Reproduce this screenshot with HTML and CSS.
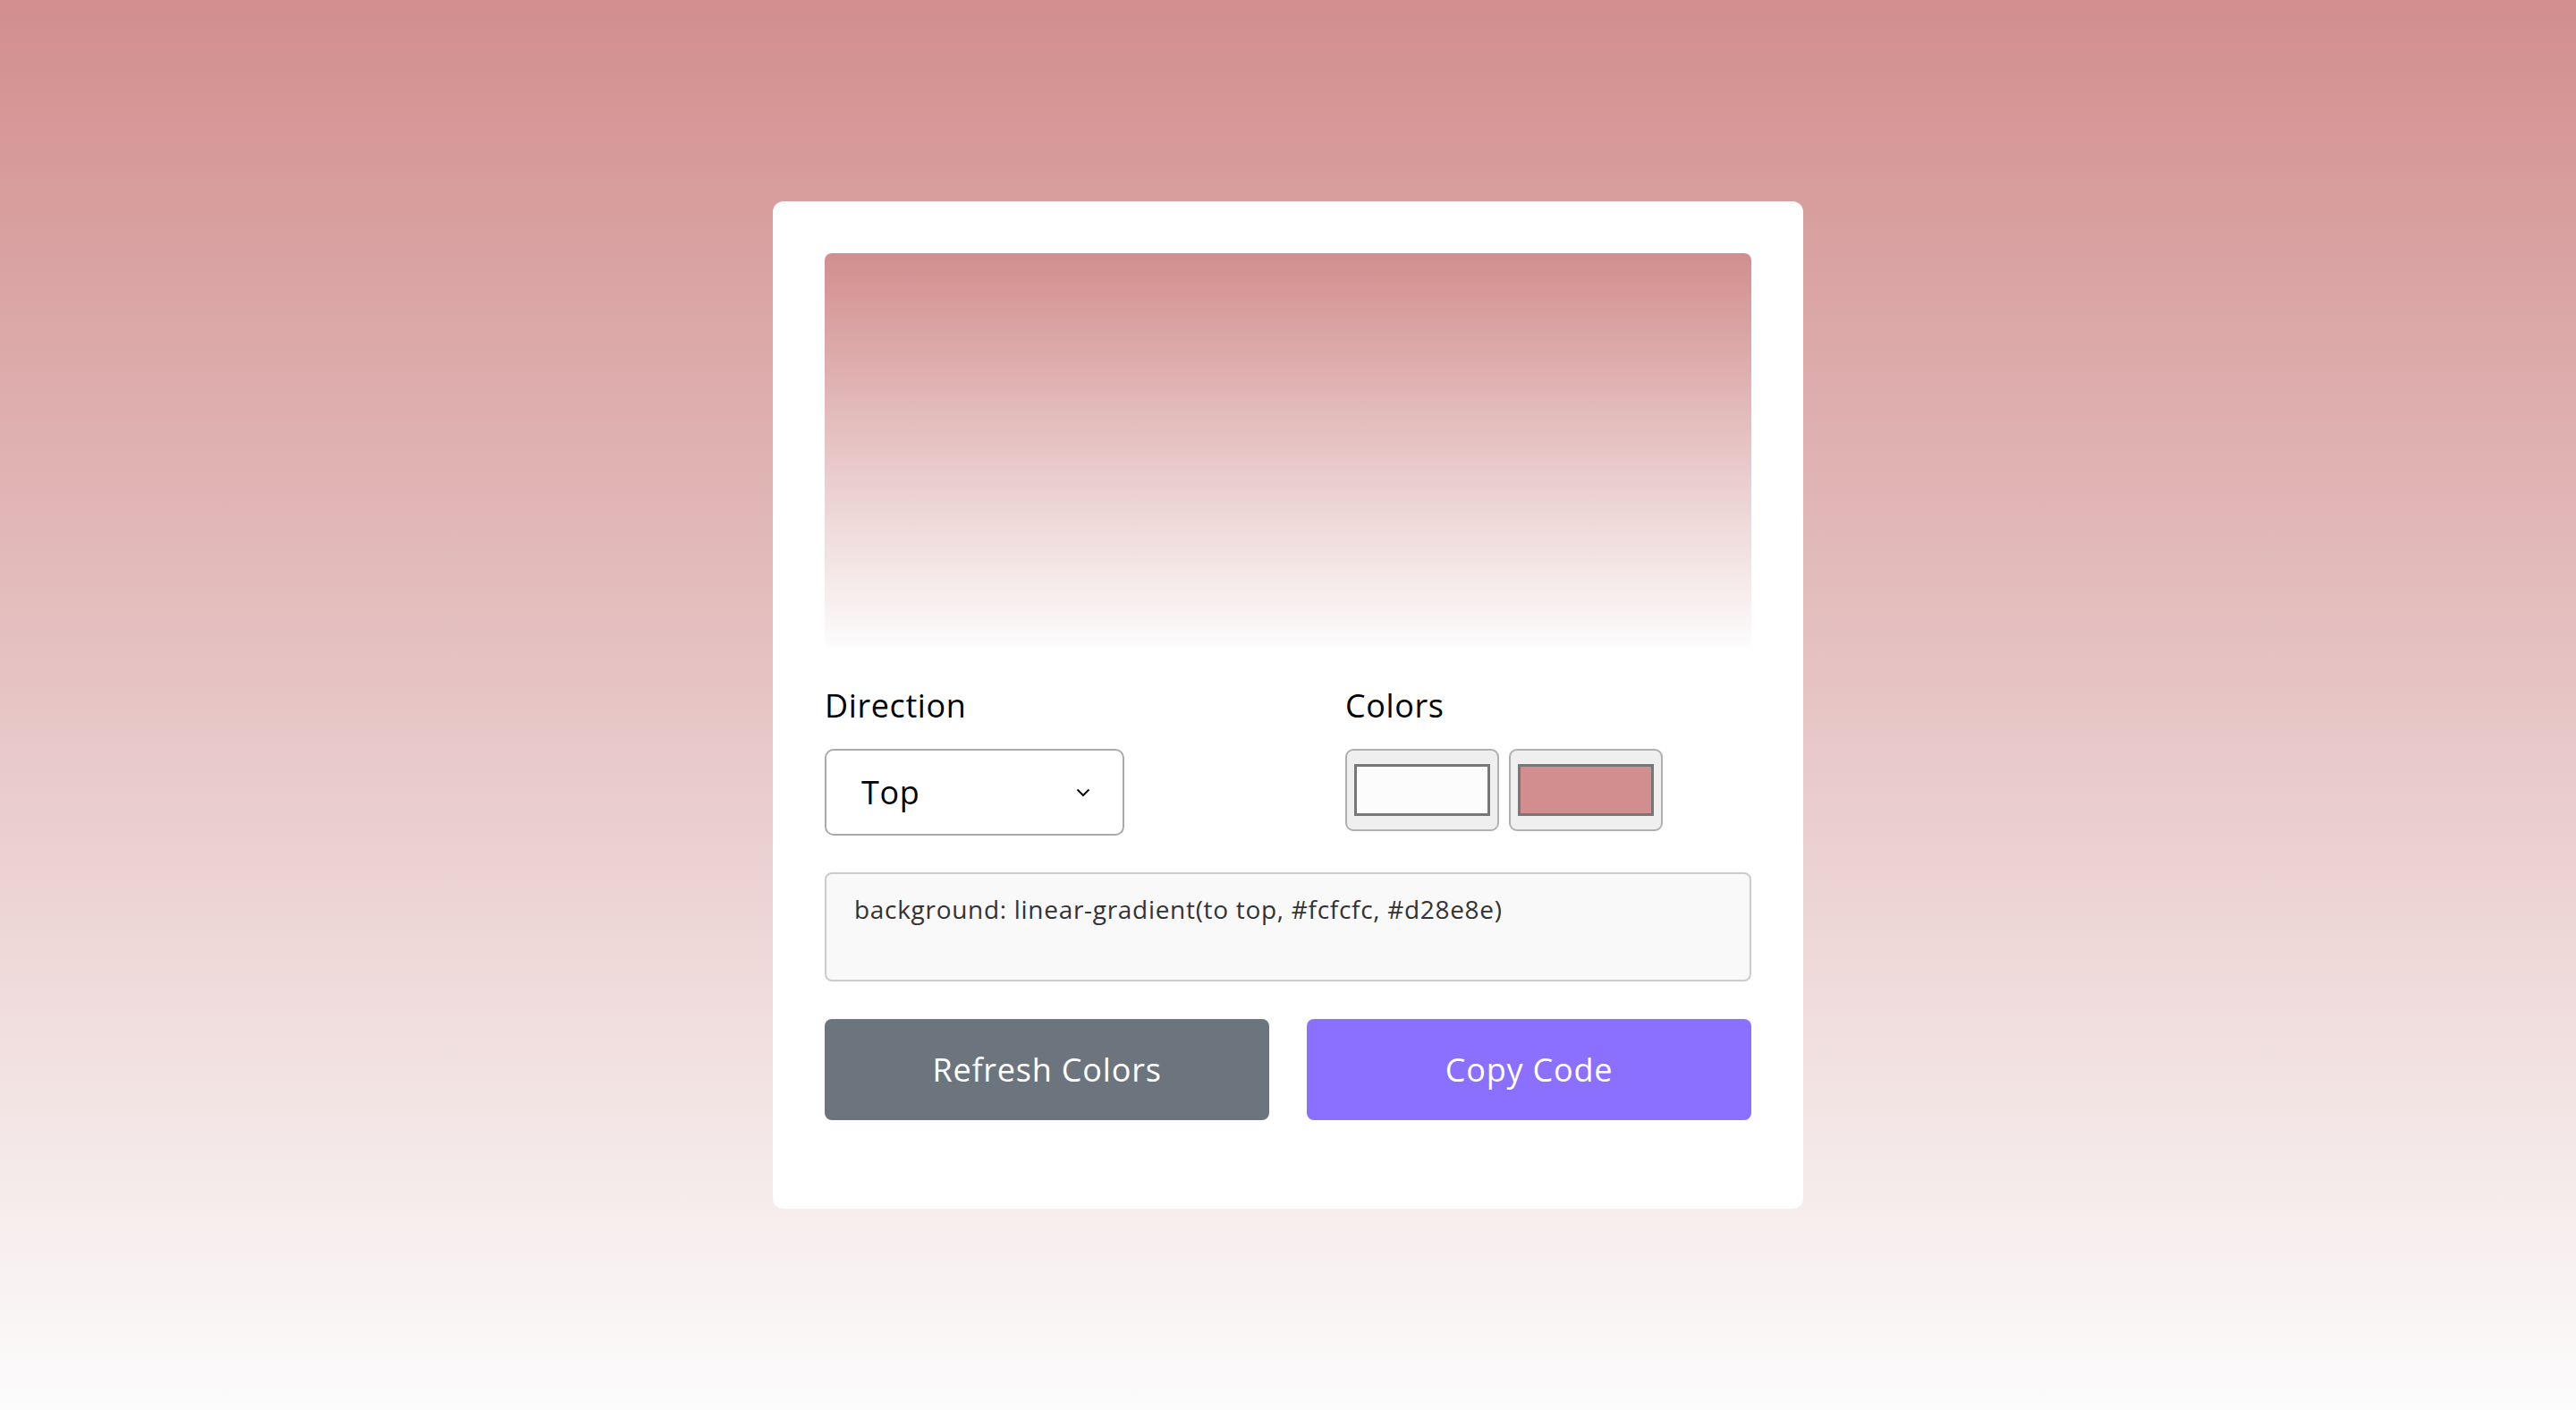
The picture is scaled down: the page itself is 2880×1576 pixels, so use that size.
FILE: index.html
```html
<!DOCTYPE html>
<html lang="en">
<head>
<meta charset="utf-8">
<title>Gradient Generator</title>
<link rel="stylesheet" href="styles.css">
</head>
<body>
<main class="card">
  <div class="preview"></div>
  <div class="controls">
    <div class="field">
      <label class="label">Direction</label>
      <div class="select">
        <span class="select-value">Top</span>
        <svg class="chevron" width="16" height="10" viewBox="0 0 16 10"><path d="M1.5 1.5 L8 8 L14.5 1.5" fill="none" stroke="#111" stroke-width="2"/></svg>
      </div>
    </div>
    <div class="field">
      <label class="label">Colors</label>
      <div class="swatches">
        <div class="swatch"><span class="swatch-fill swatch-light"></span></div>
        <div class="swatch"><span class="swatch-fill swatch-pink"></span></div>
      </div>
    </div>
  </div>
  <div class="code">background: linear-gradient(to top, #fcfcfc, #d28e8e)</div>
  <div class="buttons">
    <button class="btn btn-refresh">Refresh Colors</button>
    <button class="btn btn-copy">Copy Code</button>
  </div>
</main>
</body>
</html>
```
FILE: styles.css
```css
* { box-sizing: border-box; }
html, body { height: 100%; }
body {
  margin: 0;
  min-height: 100vh;
  display: flex;
  align-items: center;
  justify-content: center;
  background: linear-gradient(to top, #fcfcfc, #d28e8e);
  font-family: "Open Sans", "Liberation Sans", sans-serif;
}
.card {
  width: 1152px;
  height: 1126px;
  background: #fff;
  border-radius: 12px;
  padding: 58px 58px;
  display: flex;
  flex-direction: column;
}
.preview {
  height: 440px;
  border-radius: 8px;
  background: linear-gradient(to top, #fcfcfc, #d28e8e);
}
.controls {
  display: grid;
  grid-template-columns: 582px 1fr;
  margin-top: 42px;
}
.field { display: flex; flex-direction: column; }
.label {
  font-size: 36px;
  line-height: 48px;
  letter-spacing: 0.6px;
  color: #000;
}
.select {
  margin-top: 24px;
  width: 335px;
  height: 97px;
  border: 2px solid #aaa;
  border-radius: 10px;
  display: flex;
  align-items: center;
  justify-content: space-between;
  padding: 0 36px 0 39px;
}
.select-value { font-size: 36px; letter-spacing: 0.6px; color: #000; }
.chevron { display: block; }
.swatches { margin-top: 24px; display: flex; gap: 11px; }
.swatch {
  width: 172px;
  height: 92px;
  background: #efefef;
  border: 2px solid #b0b0b0;
  border-radius: 9px;
  padding: 15px 8px;
  display: flex;
}
.swatch-fill {
  flex: 1;
  border: 3px solid #777;
}
.swatch-light { background: #fcfcfc; }
.swatch-pink { background: #d28e8e; }
.code {
  margin-top: 41px;
  height: 122px;
  border: 2px solid #ccc;
  border-radius: 8px;
  background: #f9f9f9;
  padding: 19px 31px;
  font-size: 28px;
  line-height: 40px;
  letter-spacing: 0.7px;
  color: #333;
}
.buttons {
  margin-top: 42px;
  display: grid;
  grid-template-columns: 1fr 1fr;
  gap: 42px;
}
.btn {
  height: 113px;
  border: none;
  border-radius: 8px;
  color: #fff;
  font-family: inherit;
  font-size: 36px;
  letter-spacing: 0.8px;
}
.btn-refresh { background: #6c757d; }
.btn-copy { background: #8b6ffe; }
```
